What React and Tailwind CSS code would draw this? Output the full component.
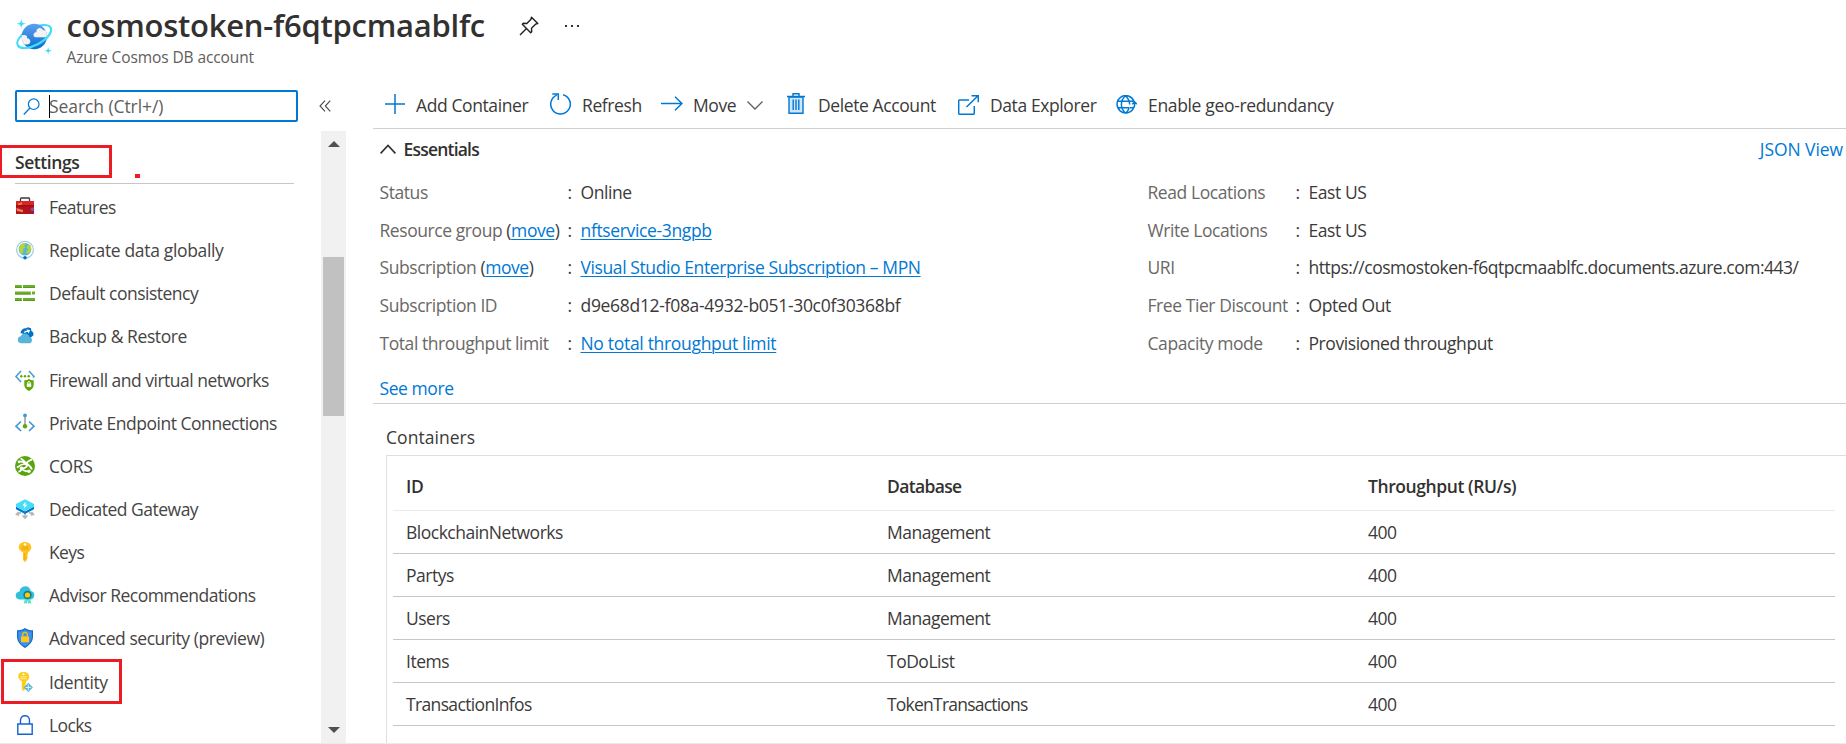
import React from "react";

const NAV = [
  ["Features", "features", "tracking-[-0.5px]"],
  ["Replicate data globally", "globe", "tracking-[-0.34px]"],
  ["Default consistency", "consistency", "tracking-[-0.5px]"],
  ["Backup & Restore", "backup", "tracking-[-0.42px]"],
  ["Firewall and virtual networks", "firewall", "tracking-[-0.5px]"],
  ["Private Endpoint Connections", "endpoint", "tracking-[-0.47px]"],
  ["CORS", "cors", "tracking-[-0.4px]"],
  ["Dedicated Gateway", "gateway", "tracking-[-0.5px]"],
  ["Keys", "key", "tracking-[-0.6px]"],
  ["Advisor Recommendations", "advisor", "tracking-[-0.53px]"],
  ["Advanced security (preview)", "shield", "tracking-[-0.45px]"],
  ["Identity", "identity", "tracking-[-0.4px]"],
  ["Locks", "lock", "tracking-[-0.6px]"],
];

const ROWS = [
  ["BlockchainNetworks", "Management", "400"],
  ["Partys", "Management", "400"],
  ["Users", "Management", "400"],
  ["Items", "ToDoList", "400"],
  ["TransactionInfos", "TokenTransactions", "400"],
];

const GLYPHS = {
  features: (
    <>
      <path d="M5.500 5V1.800q0-.8.8-.8h7.400q.8 0 .8.8V5" fill="none" stroke="#3a3a3a" strokeWidth="1.300" />
      <rect x="1" y="4" width="18" height="13" rx=".6" fill="#b3141b" />
      <rect x="1" y="4" width="18" height="4.200" fill="#d8262a" />
      <path d="M1 8.800h18" stroke="#8b0d12" strokeWidth=".9" />
      <path d="M3 6.800l4-1.600v2.400l-4 .6z" fill="#f78d1e" />
      <path d="M1.400 11l6.600 2v2.200L2 14z" fill="#e8825d" />
      <circle cx="17.400" cy="12.400" r="1.800" fill="#8a4bb0" />
    </>
  ),
  globe: (
    <>
      <circle cx="10" cy="9.800" r="8.400" fill="none" stroke="#9ccbe0" strokeWidth="1.200" />
      <circle cx="10" cy="9.300" r="6.300" fill="#59b4d9" />
      <path d="M5 6c1.500-2.300 4-3.100 6-2.600l-1.600 2.400 1 1.600-2.600 1.500.8 2.300L7 14C4.500 12.500 3.200 9 5 6zM12 5.500l3.200-.6c1.500 2.200 1.200 5.500-.6 7.600l-2.700 1.500-.5-3 2.200-1.500-2-1.600z" fill="#b8d432" />
      <circle cx="10" cy="17.800" r="1.800" fill="#0072c6" />
    </>
  ),
  consistency: (
    <g fill="#6bb02c">
      <path d="M0 2h6.800v3H0zM8 2h12v3H8zM0 8.400h15.800v3.200H0zM17 8.400h3v3.200h-3zM0 15h6.800v3H0zM8 15h12v3H8z" />
      <path d="M0 4h6.800v1H0zM8 4h12v1H8zM0 10.500h15.800v1.100H0zM0 17h6.800v1H0zM8 17h12v1H8z" fill="#559a1c" />
    </g>
  ),
  backup: (
    <>
      <path d="M5.500 7c.5-3 2.700-5 5.500-4.800l2-.9 3 .9.300 2.600c1.600.6 2.600 2.400 2 4.600L15 12 9 8z" fill="#0072c6" />
      <path d="M8.600 6.300c.8-1.300 2.200-1.900 3.700-1.500l-.8-1.600 3.700 1-1.600 3.300-.6-1.300c-1.200-.5-2.400-.1-3 .9z" fill="#fff" />
      <path d="M6.200 17.300a3.600 3.600 0 0 1-.6-7.100 4.800 4.800 0 0 1 8.900.7 3.250 3.250 0 0 1-.7 6.400z" fill="#59b4d9" />
    </>
  ),
  firewall: (
    <>
      <path d="M6 1L1 6.500 6 12M14 1l5 5.500-1 1" fill="none" stroke="#4aa0d5" strokeWidth="1.600" />
      <g fill="#5ea80a">
        <circle cx="6.300" cy="6.200" r="1.200" /><circle cx="10" cy="6.200" r="1.200" /><circle cx="13.700" cy="6.200" r="1.200" />
        <path d="M9.300 10.300c2 0 3.500-.4 4.700-1.500 1.200 1.100 2.700 1.500 4.700 1.500V15c0 3-2.200 4.600-4.700 6-2.500-1.400-4.700-3-4.700-6z" />
      </g>
      <rect x="11.800" y="13.400" width="4.400" height="3.500" fill="#fff" />
      <path d="M12.800 13.500v-1.300q1.200-1.300 2.400 0v1.300" fill="none" stroke="#fff" />
    </>
  ),
  endpoint: (
    <>
      <path d="M6 8.500L1 13.200 6 18M14 8.500l5 4.700L14 18" fill="none" stroke="#3f9bd8" strokeWidth="1.700" />
      <path d="M10 3v9" stroke="#8a8a8a" strokeWidth="1.300" />
      <circle cx="10" cy="2.400" r="1.900" fill="#3f9bd8" />
      <circle cx="10" cy="13.200" r="2.200" fill="#5ea80a" />
    </>
  ),
  cors: (
    <>
      <circle cx="10" cy="10" r="10" fill="#59a50c" />
      <path d="M3 5.500c3-.8 5.500.5 8 2 2-2 3.500-3.600 6-3.800M5.500 2.200c2 1 4 3 5.500 5.300 2.500 1 5 3.500 6 6M2 11.500c3-2.500 6-3.500 9-4M12 8.500c.5 3-2.500 4-5.500 3.800 1.500 2.200 4.500 3.200 7.500 3M7 12.300c-.6 2-2 3.200-3.500 3.500" fill="none" stroke="#fff" strokeWidth="1.700" />
      <circle cx="11" cy="7.500" r="1.900" fill="#fff" /><circle cx="6.500" cy="12.400" r="1.800" fill="#fff" />
      <circle cx="14" cy="15.200" r="1.700" fill="#fff" /><circle cx="4" cy="6" r="1.300" fill="#fff" />
    </>
  ),
  gateway: (
    <>
      <path d="M10 12v6M7.500 16.500L10 19l2.500-2.500M6 13.500l-4 1.800M3.500 13l-2 2.300 2.800 1M14 13.500l4 1.800M16.500 13l2 2.300-2.800 1" fill="none" stroke="#b5b5b5" strokeWidth="1.600" />
      <path d="M1 7.500l9 5 9-5v2.800L10 15 1 10.300z" fill="#0078d4" />
      <path d="M10 .3l9 4.700v2.600l-9 4.700-9-4.700V5z" fill="#45dcf8" />
      <path d="M10.800 2.500L7.500 6.600h2.100L8.700 9.700l3.700-4h-2.200z" fill="#fff" />
    </>
  ),
  key: (
    <>
      <path d="M10 0c3.800 0 6.300 2.300 6.300 5.200 0 2-1 3.700-3.300 5.100v1.500l-1 1 1 1-1 1.200 1 1.100-1 1.200V18l-2 2-2-2v-7.700C5 9 3.700 7.200 3.700 5.200 3.700 2.300 6.200 0 10 0z" fill="#fdc41f" />
      <circle cx="10" cy="2.400" r="1.200" fill="#fff" />
      <path d="M6.500 5h7M6.500 7h7" stroke="#f39b15" strokeWidth="1.100" />
      <path d="M9.700 11v7" stroke="#f7a91b" strokeWidth="1.200" />
    </>
  ),
  advisor: (
    <>
      <path d="M4.500 14.500C2 14.300.7 12.500.7 10.500.7 8.300 2.300 6.800 4.500 6.500 5 3.500 7 1.300 10.200 1.300c2.900 0 5 1.900 5.600 4.700 2.200.2 3.500 1.800 3.500 4.200 0 2.500-1.700 4.300-4 4.300z" fill="#32bedd" />
      <path d="M10 13l-1.200 5.700 2-.8 1.200 1.200.5-4.500.5 4.500 1.300-1.200 2 .8L15 13z" fill="#58e0c9" />
      <circle cx="12.500" cy="10" r="4.200" fill="#177b8d" /><circle cx="12.500" cy="10" r="2.600" fill="#ffca00" />
    </>
  ),
  shield: (
    <>
      <path d="M10 0c2 1.700 4.700 2.300 8 2.300v6.500c0 5.200-3.500 8.500-8 11.200-4.500-2.700-8-6-8-11.200V2.300C5.300 2.300 8 1.700 10 0z" fill="#1668c9" />
      <path d="M10 1.400c2 1.400 4.200 2 6.800 2v5.500c0 4.500-3 7.300-6.800 9.700-3.800-2.400-6.800-5.200-6.800-9.700V3.400c2.600 0 4.800-.6 6.800-2z" fill="#3d93ea" />
      <rect x="6" y="8.200" width="8" height="6" rx=".5" fill="#fdc71e" />
      <path d="M7.700 8.300V6.600c0-3 4.600-3 4.600 0v1.700" fill="none" stroke="#f5bd1b" strokeWidth="1.400" />
    </>
  ),
  identity: (
    <>
      <path d="M8.500 0c3.500 0 5.700 2 5.700 4.700 0 2-1 3.400-3 4.600v1.600l-1 1 1 1-1 1.100 1 1-1 1v1.200l-1.700 1.700-1.700-1.700V9.300c-2-1.200-3.400-2.600-3.400-4.600C2.800 2 5 0 8.500 0z" fill="#fbcd20" />
      <circle cx="8.500" cy="2.200" r="1.100" fill="#fff" />
      <path d="M5.200 4.800h6.600M5.200 6.700h6.600" stroke="#fdeb9a" strokeWidth="1" />
      <path d="M13.300 10.800l4.600 4.700-4.600 4.500-4.600-4.500z" fill="#59b4d9" />
      <path d="M13.300 12.500v6M10.500 15.500h5.600" stroke="#e8f7fd" strokeWidth=".9" />
    </>
  ),
  lock: (
    <path d="M2.800 9h14.400v10.200H2.800zM5.500 9V5.300C5.500 2.500 7.300.8 10 .8s4.500 1.700 4.500 4.500V9" fill="none" stroke="#1763d6" strokeWidth="1.400" />
  ),
};

function NavIcon({ name }) {
  return (
    <svg viewBox="0 0 20 20" className="h-5 w-5 shrink-0 overflow-visible">
      {GLYPHS[name]}
    </svg>
  );
}

function Line({ box, className, d, children }) {
  return (
    <svg viewBox={box} fill="none" stroke="#0078d4" strokeWidth="1.500" className={"shrink-0 " + className}>
      {d && <path d={d} />}
      {children}
    </svg>
  );
}

function Header() {
  return (
    <header className="flex h-[74px] shrink-0 pl-4">
      <svg viewBox="0 0 36 37" className="mt-[19px] h-[37px] w-9 shrink-0 overflow-visible">
        <defs>
          <linearGradient id="planet" x1="0" y1="0" x2="0" y2="1">
            <stop offset="0" stopColor="#5ea0ef" />
            <stop offset="1" stopColor="#0a6fd0" />
          </linearGradient>
          <clipPath id="disc"><circle cx="18.300" cy="17.500" r="12.700" /></clipPath>
        </defs>
        <ellipse cx="18.200" cy="17.500" rx="18.600" ry="8.500" transform="rotate(-28 18.200 17.500)" fill="none" stroke="#45dcf8" strokeWidth="2" />
        <circle cx="18.300" cy="17.500" r="12.700" fill="url(#planet)" />
        <g clipPath="url(#disc)" fill="#f2f2f2">
          <path d="M20.500 18.300c-2.300 0-3.300-1.500-2.900-3 .4-1.400 1.500-2 2.800-2-.3-2.200.9-3.900 2.900-4.200 1.500-.2 3 .6 3.600 2l5 .9v6.300z" />
          <path d="M4 16.200l4.500-.2c2 0 3 1.500 2.600 3.300 2.200.2 3.400 1.700 3.200 3.500-.2 1.700-1.500 2.700-3.200 2.700H6z" />
        </g>
        <path d="M-.4 17.500a18.600 8.500 0 0 0 37.200 0" transform="rotate(-28 18.200 17.500)" fill="none" stroke="#45dcf8" strokeWidth="2.200" />
        <path d="M5.300-.3c.5 3.900 1.200 4.600 4.800 5-3.600.4-4.300 1.100-4.800 5C4.800 5.800 4.100 5.100.5 4.700 4.100 4.300 4.800 3.600 5.300-.3zM32.200 27.800c.4 3 1 3.600 3.900 3.900-2.900.4-3.500 1-3.900 4-.4-3-1-3.600-3.900-4 2.900-.3 3.500-.9 3.900-3.900z" fill="#45dcf8" />
      </svg>
      <div className="ml-[14.500px] flex flex-col">
        <div className="mt-[5px] flex h-10 items-center">
          <h1 className="w-[452px] whitespace-nowrap text-[31px] leading-10 font-semibold tracking-[-0.250px] text-[#323130]">cosmostoken-f6qtpcmaablfc</h1>
          <svg viewBox="0 0 20 20" className="h-5 w-5 translate-y-px" fill="none" stroke="#201f1e" strokeWidth="1.400" strokeLinejoin="round">
            <path d="M12.500 1.200l6.300 6.300-2.300.7-4 4 .2 3.500-1 1L3.300 8.300l1-1 3.500.2 4-4zM7.500 12.500L1 19" />
          </svg>
          <svg viewBox="0 0 14 2" className="ml-[26px] h-[2px] w-[14px] translate-y-px" fill="#323130">
            <path d="M0 0h2v2H0zM6 0h2v2H6zM12 0h2v2h-2z" />
          </svg>
        </div>
        <div className="text-[15.500px] leading-6 tracking-[-0.100px] text-[#605e5c]">Azure Cosmos DB account</div>
      </div>
    </header>
  );
}

function Sidebar() {
  return (
    <aside className="flex w-[346px] shrink-0 flex-col">
      <div className="mt-4 flex h-8 items-center pl-[15px]">
        <div className="flex h-8 w-[283px] items-center rounded-[2px] border-[2.500px] border-[#0078d4] pl-[6px]">
          <Line box="0 0 17 17" className="h-[17px] w-[17px]"><circle cx="10.700" cy="6.200" r="5.300" strokeWidth="1.200" /><path d="M7 10L.8 16.500" strokeWidth="1.300" /></Line>
          <div className="ml-[9px] h-[23px] w-px bg-black" />
          <span className="-ml-px text-[17.500px] leading-6 tracking-[-0.080px] text-[#605e5c]">Search (Ctrl+/)</span>
        </div>
        <svg viewBox="0 0 12 12" className="ml-[21px] h-3 w-3" fill="none" stroke="#484644" strokeWidth="1.100">
          <path d="M6 .7L1 6l5 5.300M11.300.7l-5 5.300 5 5.300" />
        </svg>
      </div>
      <div className="mt-[9px] flex min-h-0 flex-1">
        <nav className="flex w-[321px] flex-col pt-[14px]">
          <div className="flex h-[33px] items-end">
            <div className="flex h-[33px] w-[112px] items-center border-[3px] border-l-2 border-[#ed1c24] pt-[2px] pl-[13px] text-[17.500px] leading-none font-semibold tracking-[-0.420px] text-[#323130]">Settings</div>
            <div className="ml-[23px] h-1 w-[5px] bg-[#ed1c24]" />
          </div>
          <div className="mt-[5px] mr-[27px] ml-[15px] h-px shrink-0 bg-[#c8c6c4]" />
          <ul className="mt-[1.400px] flex flex-col">
            {NAV.map(([label, icon, tracking]) => (
              <li key={label} className="relative flex h-[43.150px] shrink-0 items-center pl-[15px]">
                {label === "Identity" && <span className="absolute -top-px left-px h-[45px] w-[121px] border-[3px] border-[#ed1c24]" />}
                <NavIcon name={icon} />
                <span className={"ml-[14px] whitespace-nowrap text-[17.500px] leading-6 text-[#464443] " + tracking}>{label}</span>
              </li>
            ))}
          </ul>
        </nav>
        <div className="flex w-[25px] flex-col items-center bg-[#f1f1f1]">
          <svg viewBox="0 0 12 6" className="mt-[10px] h-[6px] w-3" fill="#505050"><path d="M0 6l6-6 6 6z" /></svg>
          <div className="mt-[110px] h-[159px] w-[21px] bg-[#c1c1c1]" />
          <svg viewBox="0 0 12 6" className="mt-auto mb-[10px] h-[6px] w-3" fill="#505050"><path d="M0 0l6 6 6-6z" /></svg>
        </div>
      </div>
    </aside>
  );
}

function Tool({ width, gap, label, children, after }) {
  return (
    <div className={"flex shrink-0 items-center whitespace-nowrap " + width}>
      {children}
      <span className={"text-[17.500px] leading-6 tracking-[-0.400px] text-[#3b3a39] " + gap}>{label}</span>
      {after}
    </div>
  );
}

function Toolbar() {
  return (
    <div className="flex h-[55px] shrink-0 items-center border-b border-[#d2d0ce] pt-[7px] pl-3">
      <Tool width="w-[165px]" gap="ml-[11px]" label="Add Container">
        <Line box="0 0 20 20" className="h-5 w-5 -translate-y-px" d="M10 0v20M0 10h20" />
      </Tool>
      <Tool width="w-[111px]" gap="ml-[11px]" label="Refresh">
        <Line box="0 0 21 22" className="h-[22px] w-[21px] -translate-y-px" d="M13 1.700A9.800 9.800 0 1 1 6.800 2.100M2.300 1h6v6" />
      </Tool>
      <Tool width="w-[126px]" gap="ml-[10px]" label="Move" after={
        <svg viewBox="0 0 16 9" className="ml-[11px] h-[9px] w-4 translate-y-px" fill="none" stroke="#605e5c" strokeWidth="1.300"><path d="M.5.500L8 8 15.500.5" /></svg>
      }>
        <Line box="0 0 22 15" className="h-[15px] w-[22px] -translate-y-px" d="M0 7.500h21M14 .7l7 6.800-7 6.800" />
      </Tool>
      <Tool width="w-[171px]" gap="ml-[13px]" label="Delete Account">
        <svg viewBox="0 0 18 21" className="h-[21px] w-[18px] shrink-0 -translate-y-px" fill="none" stroke="#0078d4" strokeWidth="1.400">
          <path d="M2 4h14v16.300H2z" fill="#cfe6f8" />
          <path d="M0 3.500h18M6 3.500V.8h6v2.700M6.200 6.500V17M9 6.500V17M11.800 6.500V17" />
        </svg>
      </Tool>
      <Tool width="w-[158px]" gap="ml-[11px]" label="Data Explorer">
        <Line box="0 0 21 20" className="h-5 w-[21px]" d="M11 5H1.700q-1 0-1 1v12.300q0 1 1 1h13.600q1 0 1-1V11M8.500 12L20 .8M13.500.8h6.800v6.500" />
      </Tool>
      <Tool width="w-[230px]" gap="ml-[11px]" label={<span className="tracking-[-0.340px]">Enable geo-redundancy</span>}>
        <Line box="0 0 21 19" className="h-[19px] w-[21px]" d="M18 6.500A8.700 8.700 0 1 0 17.600 13M9.500.8c-5.500 5-5.500 12.400 0 17.400M9.500.8c3 2.900 4.200 5.500 4.100 8.700M9.500 18.200c1.800-1.500 2.900-3.200 3.500-5M1.500 6.300H17M1.500 12.700h12M14 12.700h2.500q2 0 2-2V7M16.200 9.200l2.300-2.300 2.300 2.300" />
      </Tool>
    </div>
  );
}

const link = "text-[#0078d4] underline decoration-1 underline-offset-2";

function Field({ label, move, labelWidth, children }) {
  return (
    <div className="flex h-[37.800px] items-center whitespace-nowrap">
      <span className={"shrink-0 text-[#6a6866] " + labelWidth}>
        {label}
        {move && <span className="text-[#3b3a39]"> (<a className={link}>move</a>)</span>}
      </span>
      <span className="w-[13px] shrink-0">:</span>
      <span>{children}</span>
    </div>
  );
}

function Essentials() {
  return (
    <section className="flex h-[275px] shrink-0 flex-col border-b border-[#d2d0ce] pl-[6.500px] text-[17.500px] leading-6 tracking-[-0.430px] text-[#3b3a39]">
      <div className="mt-2 flex h-6 items-center pr-[3px]">
        <svg viewBox="0 0 16 10" className="h-[10px] w-4" fill="none" stroke="#323130" strokeWidth="1.600"><path d="M.6 9.400L8 1.500l7.400 7.900" /></svg>
        <span className="ml-2 font-semibold tracking-[-0.800px] text-[#323130]">Essentials</span>
        <a className="ml-auto tracking-[-0.080px] text-[#0078d4]">JSON View</a>
      </div>
      <div className="mt-3 flex">
        <div className="w-[768px] shrink-0">
          <Field labelWidth="w-[188px]" label="Status">Online</Field>
          <Field labelWidth="w-[188px]" label="Resource group" move><a className={link + " tracking-[-0.350px]"}>nftservice-3ngpb</a></Field>
          <Field labelWidth="w-[188px]" label="Subscription" move><a className={link + " tracking-[-0.400px]"}>Visual Studio Enterprise Subscription – MPN</a></Field>
          <Field labelWidth="w-[188px]" label="Subscription ID"><span className="tracking-[-0.310px]">d9e68d12-f08a-4932-b051-30c0f30368bf</span></Field>
          <Field labelWidth="w-[188px]" label="Total throughput limit"><a className={link + " tracking-[-0.310px]"}>No total throughput limit</a></Field>
        </div>
        <div>
          <Field labelWidth="w-[148px]" label="Read Locations">East US</Field>
          <Field labelWidth="w-[148px]" label="Write Locations">East US</Field>
          <Field labelWidth="w-[148px]" label="URI"><span className="tracking-[-0.490px]">https://cosmostoken-f6qtpcmaablfc.documents.azure.com:443/</span></Field>
          <Field labelWidth="w-[148px]" label="Free Tier Discount">Opted Out</Field>
          <Field labelWidth="w-[148px]" label="Capacity mode">Provisioned throughput</Field>
        </div>
      </div>
      <a className="mt-[14px] text-[#0078d4]">See more</a>
    </section>
  );
}

function Containers() {
  return (
    <section className="flex min-h-0 flex-1 flex-col pl-[13px] text-[17.500px] leading-6 tracking-[-0.500px] text-[#3b3a39]">
      <h2 className="mt-[21px] tracking-[0.050px]">Containers</h2>
      <div className="mt-[6px] flex-1 border-t border-l border-[#e1dfdd] pr-[11px] pl-[6px]">
        <div className="grid h-[55px] grid-cols-[481px_481px_1fr] items-center border-b border-[#edebe9] pt-[6px] pl-[13px] font-semibold tracking-[-0.420px] text-[#323130]">
          <span>ID</span><span className="tracking-[-0.650px]">Database</span><span>Throughput (RU/s)</span>
        </div>
        {ROWS.map((row) => (
          <div key={row[0]} className="grid h-[43px] grid-cols-[481px_481px_1fr] items-center border-b border-[#c8c6c4] pl-[13px]">
            {row.map((cell, i) => <span key={i} className={cell.endsWith("Transactions") ? "tracking-[-0.780px]" : cell.startsWith("Transaction") ? "tracking-[-0.650px]" : ""}>{cell}</span>)}
          </div>
        ))}
      </div>
    </section>
  );
}

export default function App() {
  return (
    <div className="flex h-[744px] w-full flex-col overflow-hidden border-b border-[#edebe9] bg-white font-['Open_Sans',sans-serif]">
      <Header />
      <div className="flex min-h-0 flex-1">
        <Sidebar />
        <main className="ml-[27px] flex min-w-0 flex-1 flex-col">
          <Toolbar />
          <Essentials />
          <Containers />
        </main>
      </div>
    </div>
  );
}
